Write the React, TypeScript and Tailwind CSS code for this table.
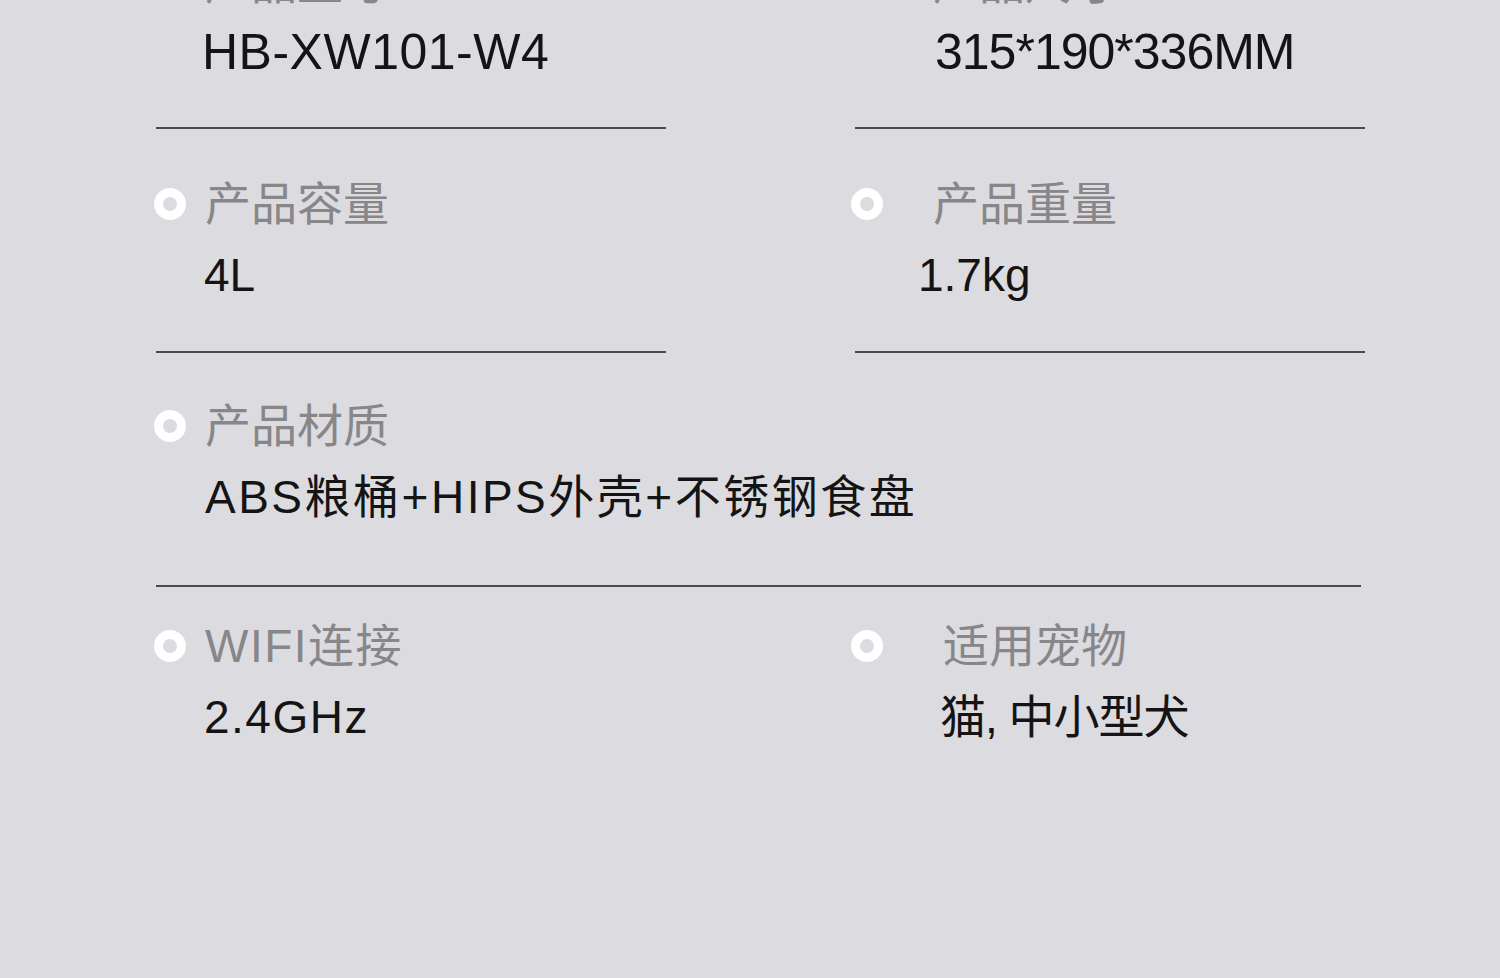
import type { ReactNode } from 'react';

const font = { fontFamily: '"Liberation Sans", "Noto Sans CJK SC", sans-serif' };

function Dot({ className }: { className: string }) {
  return <span className={`block w-[32px] h-[32px] shrink-0 rounded-full border-[9px] border-white ${className}`} />;
}

function Line({ className = 'w-[510px]' }: { className?: string }) {
  return <div className={`h-[2px] bg-[#4b4b4d] ${className}`} />;
}

type CellProps = {
  label: string;
  value: ReactNode;
  dotClass: string;
  labelClass: string;
  valueClass: string;
  labelGap: string;
  valueGap: string;
};

function Cell({ label, value, dotClass, labelClass, valueClass, labelGap, valueGap }: CellProps) {
  return (
    <div className={`flex flex-col ${labelGap}`}>
      <div className="flex items-center h-[46px]">
        <Dot className={dotClass} />
        <span className={`text-[46px] leading-[46px] text-[#878789] whitespace-nowrap ${labelClass}`}>{label}</span>
      </div>
      <div className={`text-[#141414] whitespace-nowrap ${valueGap} ${valueClass}`}>{value}</div>
    </div>
  );
}

export default function App() {
  return (
    <div className="w-[1500px] h-[978px] bg-[#dcdbe0] overflow-hidden" style={font}>
      <div className="-mt-[40px] pl-[156px] flex flex-col">
        {/* row 1, cut by the top edge */}
        <div className="grid grid-cols-[510px_510px] gap-x-[189px]">
          <div className="flex flex-col">
            <Cell
              label="产品型号"
              value="HB-XW101-W4"
              dotClass="-ml-[2px] -translate-y-[6px]"
              labelClass="ml-[19px]"
              valueClass="pl-[46px] text-[50px] leading-[50px] tracking-[0.5px]"
              labelGap=""
              valueGap="mt-[21px]"
            />
            <Line className="w-[510px] mt-[50px]" />
          </div>
          <div className="flex flex-col">
            <Cell
              label="产品尺寸"
              value="315*190*336MM"
              dotClass="-ml-[4px] -translate-y-[6px]"
              labelClass="ml-[50px]"
              valueClass="pl-[80px] text-[50px] leading-[50px] tracking-[-1px]"
              labelGap=""
              valueGap="mt-[21px]"
            />
            <Line className="w-[510px] mt-[50px]" />
          </div>
        </div>

        {/* row 2 */}
        <div className="grid grid-cols-[510px_510px] gap-x-[189px]">
          <div className="flex flex-col">
            <Cell
              label="产品容量"
              value="4L"
              dotClass="-ml-[2px]"
              labelClass="ml-[19px]"
              valueClass="pl-[48px] text-[46px] leading-[46px]"
              labelGap="mt-[52px]"
              valueGap="mt-[25px]"
            />
            <Line className="w-[510px] mt-[53px]" />
          </div>
          <div className="flex flex-col">
            <Cell
              label="产品重量"
              value="1.7kg"
              dotClass="-ml-[4px]"
              labelClass="ml-[50px]"
              valueClass="pl-[63px] text-[46px] leading-[46px]"
              labelGap="mt-[52px]"
              valueGap="mt-[25px]"
            />
            <Line className="w-[510px] mt-[53px]" />
          </div>
        </div>

        {/* row 3 */}
        <div className="flex flex-col">
          <Cell
            label="产品材质"
            value="ABS粮桶+HIPS外壳+不锈钢食盘"
            dotClass="-ml-[2px]"
            labelClass="ml-[19px]"
            valueClass="pl-[49px] text-[46px] leading-[46px] tracking-[2.5px]"
            labelGap="mt-[50px]"
            valueGap="mt-[25px]"
          />
          <Line className="w-[1205px] mt-[65px]" />
        </div>

        {/* row 4 */}
        <div className="grid grid-cols-[510px_510px] gap-x-[189px]">
          <Cell
            label="WIFI连接"
            value="2.4GHz"
            dotClass="-ml-[2px]"
            labelClass="ml-[19px] tracking-[1.5px]"
            valueClass="pl-[48px] text-[46px] leading-[46px] tracking-[1.5px]"
            labelGap="mt-[36px]"
            valueGap="mt-[25px]"
          />
          <Cell
            label="适用宠物"
            value="猫, 中小型犬"
            dotClass="-ml-[4px]"
            labelClass="ml-[60px]"
            valueClass="pl-[85px] text-[46px] leading-[46px] tracking-[-1px]"
            labelGap="mt-[36px]"
            valueGap="mt-[25px]"
          />
        </div>
      </div>
    </div>
  );
}
